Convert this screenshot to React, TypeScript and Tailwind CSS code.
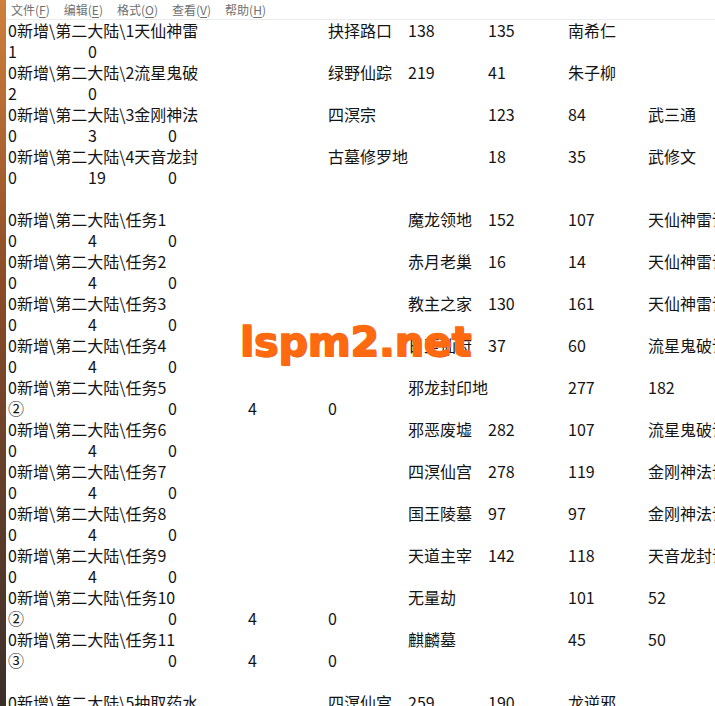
import React from "react";

const COLS = [
  "col-start-1",
  "col-start-2",
  "col-start-3",
  "col-start-4",
  "col-start-5",
  "col-start-6",
  "col-start-7",
  "col-start-8",
  "col-start-9",
];

type Cell = [number, string];

const P = "0新增\\第二大陆\\";
const z40: Cell[] = [
  [0, "0"],
  [1, "4"],
  [2, "0"],
];

const lines: Cell[][] = [
  [[0, P + "1天仙神雷"], [4, "抉择路口"], [5, "138"], [6, "135"], [7, "南希仁"]],
  [[0, "1"], [1, "0"]],
  [[0, P + "2流星鬼破"], [4, "绿野仙踪"], [5, "219"], [6, "41"], [7, "朱子柳"]],
  [[0, "2"], [1, "0"]],
  [[0, P + "3金刚神法"], [4, "四溟宗"], [6, "123"], [7, "84"], [8, "武三通"]],
  [[0, "0"], [1, "3"], [2, "0"]],
  [[0, P + "4天音龙封"], [4, "古墓修罗地"], [6, "18"], [7, "35"], [8, "武修文"]],
  [[0, "0"], [1, "19"], [2, "0"]],
  [],
  [[0, P + "任务1"], [5, "魔龙领地"], [6, "152"], [7, "107"], [8, "天仙神雷诀"]],
  z40,
  [[0, P + "任务2"], [5, "赤月老巢"], [6, "16"], [7, "14"], [8, "天仙神雷诀"]],
  z40,
  [[0, P + "任务3"], [5, "教主之家"], [6, "130"], [7, "161"], [8, "天仙神雷诀"]],
  z40,
  [[0, P + "任务4"], [5, "日至仙府"], [6, "37"], [7, "60"], [8, "流星鬼破诀"]],
  z40,
  [[0, P + "任务5"], [5, "邪龙封印地"], [7, "277"], [8, "182"]],
  [[0, "②"], [2, "0"], [3, "4"], [4, "0"]],
  [[0, P + "任务6"], [5, "邪恶废墟"], [6, "282"], [7, "107"], [8, "流星鬼破诀"]],
  z40,
  [[0, P + "任务7"], [5, "四溟仙宫"], [6, "278"], [7, "119"], [8, "金刚神法诀"]],
  z40,
  [[0, P + "任务8"], [5, "国王陵墓"], [6, "97"], [7, "97"], [8, "金刚神法诀"]],
  z40,
  [[0, P + "任务9"], [5, "天道主宰"], [6, "142"], [7, "118"], [8, "天音龙封诀"]],
  z40,
  [[0, P + "任务10"], [5, "无量劫"], [7, "101"], [8, "52"]],
  [[0, "②"], [2, "0"], [3, "4"], [4, "0"]],
  [[0, P + "任务11"], [5, "麒麟墓"], [7, "45"], [8, "50"]],
  [[0, "③"], [2, "0"], [3, "4"], [4, "0"]],
  [],
  [[0, P + "5抽取药水"], [4, "四溟仙宫"], [5, "259"], [6, "190"], [7, "龙逆邪"]],
];

const menus: [string, string][] = [
  ["文件", "F"],
  ["编辑", "E"],
  ["格式", "O"],
  ["查看", "V"],
  ["帮助", "H"],
];

export default function App() {
  return (
    <div className="relative flex h-[706px] w-[715px] overflow-hidden bg-white font-['Noto_Sans_CJK_SC','Noto_Sans',sans-serif]">
      <div className="w-[6px] shrink-0 bg-linear-to-b from-[#d0803c] via-[#8c4b26] via-40% to-[#3b2f2a]" />
      <div className="flex min-w-0 flex-1 flex-col overflow-hidden">
        <div className="flex h-[20px] shrink-0 items-center gap-[14px] border-b border-[#ececec] pl-[5px] text-[12px] leading-none text-[#707070]">
          {menus.map(([t, k]) => (
            <span key={k} className="whitespace-nowrap">
              {t}(<span className="underline underline-offset-2">{k}</span>)
            </span>
          ))}
        </div>
        <div className="pl-[2px] text-[16px] text-[#141414]">
          {lines.map((cells, i) => (
            <div
              key={i}
              className="grid h-[21px] grid-cols-[repeat(9,80px)] whitespace-nowrap leading-[21px]"
            >
              {cells.map(([c, t], j) => (
                <span key={j} className={COLS[c] + " row-start-1"}>
                  {t}
                </span>
              ))}
            </div>
          ))}
        </div>
      </div>
      <div className="pointer-events-none absolute left-[240px] top-[322px] font-['DejaVu_Sans',sans-serif] text-[41px] font-bold leading-none text-[#ff6a10] [-webkit-text-stroke:1.5px_#ff6a10] [text-shadow:1px_1px_0_#c0521a]">
        lspm2.net
      </div>
    </div>
  );
}
